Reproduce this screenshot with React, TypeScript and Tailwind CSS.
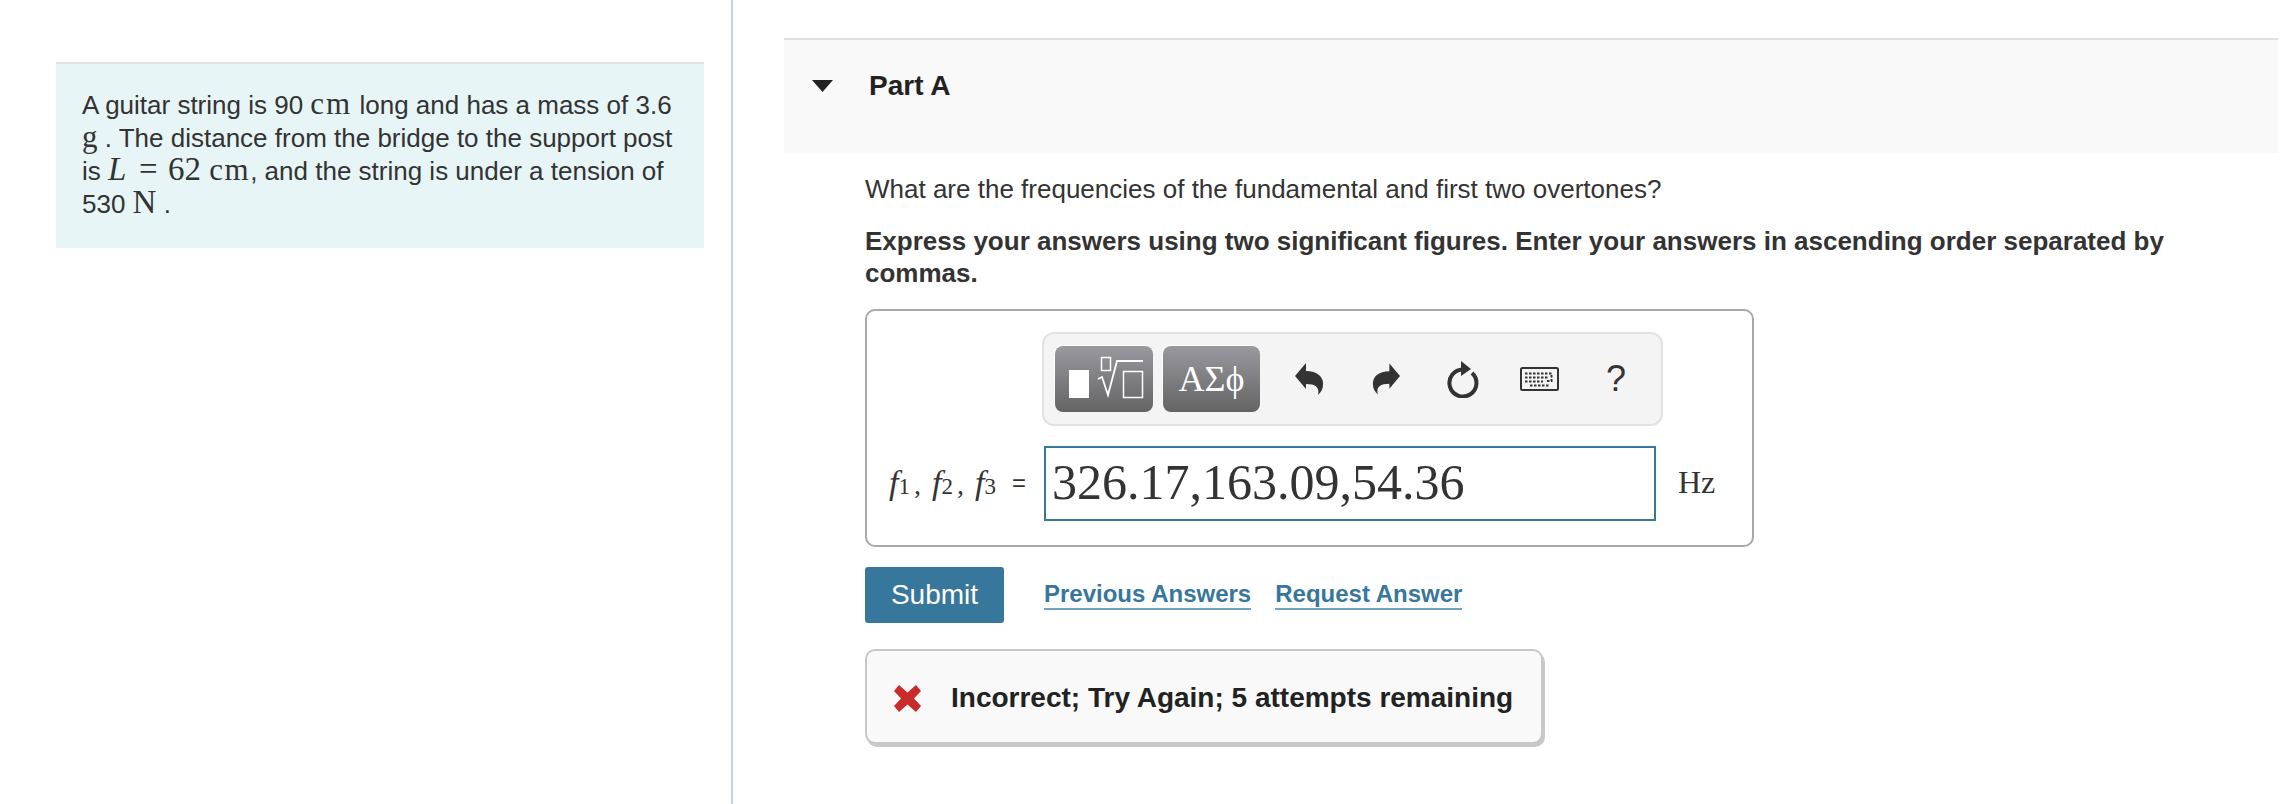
const serif = "font-['Liberation_Serif',serif]";

function Sub({ n, comma }: { n: string; comma?: boolean }) {
  return (
    <span className="inline-block w-[43px]">
      <i className="text-[34px]">f</i>
      <span className="text-[23px]">{n}</span>
      {comma ? <span className="ml-[4px] text-[28px]">,</span> : null}
    </span>
  );
}

function Toolbar() {
  return (
    <div className="ml-[175px] flex h-[94px] w-[621px] items-center rounded-[12px] border-2 border-[#e2e2e2] bg-[#f4f4f4] pl-[11px]">
      <div className="h-[66px] w-[98px] shrink-0 rounded-[8px] bg-linear-to-b from-[#9a99a0] to-[#646464] shadow-[-1px_-1px_0_#fff]">
        <svg width="98" height="66" viewBox="0 0 98 66" fill="none">
          <rect x="14" y="24" width="20" height="28" fill="#fff" />
          <rect x="46.500" y="11.500" width="9" height="13" stroke="#fff" strokeWidth="1.500" />
          <path d="M43 33l4-2 6 18 9-34h26" stroke="#fff" strokeWidth="1.800" />
          <rect x="68.500" y="25.500" width="19" height="26" stroke="#fff" strokeWidth="1.500" />
        </svg>
      </div>
      <div className={`ml-[10px] flex h-[66px] w-[97px] shrink-0 items-center justify-center rounded-[8px] bg-linear-to-b from-[#9a99a0] to-[#646464] text-[36px] text-white shadow-[-1px_-1px_0_#fff] ${serif}`}>
        ΑΣϕ
      </div>
      <svg className="ml-[35px] shrink-0" width="29" height="32" viewBox="0 0 29 32" fill="#333">
        <path d="M0 13L11 0v8c11 0 18 6 17 14 0 4-2 7-5 10 2-8-3-11-12-11v5z" />
      </svg>
      <svg className="ml-[48px] shrink-0" width="28" height="32" viewBox="0 0 29 32" fill="#333">
        <path d="M29 13L18 0v8C7 8 0 14 1 22c0 4 2 7 5 10-2-8 3-11 12-11v5z" />
      </svg>
      <svg className="ml-[46px] shrink-0" width="34" height="37" viewBox="0 0 34 37" fill="none">
        <path d="M17 8.500A13.500 13.500 0 1 0 26 12" stroke="#333" strokeWidth="4" />
        <path d="M15 0l10 8-10 7z" fill="#333" />
      </svg>
      <svg className="ml-[40px] shrink-0" width="39" height="24" viewBox="0 0 39 24" fill="none">
        <rect x="1" y="1" width="37" height="22" rx="1.500" fill="#f4f4f4" stroke="#333" strokeWidth="2" />
        <path d="M5 6.500h28M5 10.500h24M31.500 8v6H26M5 14.500h18M10 18.500h20" stroke="#333" strokeWidth="2" strokeDasharray="2.500 1.500" />
      </svg>
      <div className="ml-[47px] font-['Liberation_Sans',sans-serif] text-[36px] leading-none text-[#333]">?</div>
    </div>
  );
}

export default function App() {
  return (
    <div className="flex h-[804px] w-[2296px] overflow-hidden bg-white font-['Liberation_Sans',sans-serif] text-[#333]">
      <aside className="h-full w-[733px] shrink-0 border-r-2 border-[#c5d0e0] pt-[62px] pl-[56px]">
        <div className="h-[186px] w-[648px] border-t-2 border-[#e0e3e3] bg-[#e7f5f6] px-[26px] pt-[25px] text-[26px] leading-[33px]">
          A guitar string is 90 <span className={`${serif} text-[31px] leading-[0] tracking-[2px]`}>cm</span> long and has a mass of 3.6{" "}
          <span className={`${serif} text-[31px] leading-[0]`}>g</span> . The distance from the bridge to the support post is{" "}
          <span className={`${serif} text-[33px] leading-[0]`}>
            <i className="inline-block w-[31px]">L</i>
            <span className="inline-block w-[29px]">=</span>62 <span className="text-[31px] tracking-[1.5px]">cm</span>
          </span>
          , and the string is under a tension of 530 <span className={`${serif} text-[33px] leading-[0]`}>N</span> .
        </div>
      </aside>
      <main className="w-[1563px] shrink-0 pt-[38px] pl-[51px]">
        <header className="flex h-[115px] w-[1494px] items-start border-t-2 border-[#e0e0e0] bg-[#f9f9f9] pt-[28px]">
          <svg className="mt-[12px] ml-[28px]" width="21" height="12" viewBox="0 0 21 12" fill="#222">
            <path d="M0 0h21L10.500 12z" />
          </svg>
          <h2 className="ml-[36px] text-[28px] leading-[36px] font-bold text-[#222]">Part A</h2>
        </header>
        <section className="pl-[81px]">
          <p className="mt-[20px] text-[26px] leading-[33px]">What are the frequencies of the fundamental and first two overtones?</p>
          <p className="mt-[19px] w-[1340px] text-[26px] leading-[32px] font-bold">
            Express your answers using two significant figures. Enter your answers in ascending order separated by commas.
          </p>
          <div className="mt-[20px] h-[238px] w-[889px] rounded-[10px] border-2 border-[#a9a9a9] pt-[21px]">
            <Toolbar />
            <div className="mt-[20px] flex items-center">
              <div className={`mb-[2px] ml-[22px] flex w-[155px] shrink-0 items-center whitespace-nowrap ${serif}`}>
                <Sub n="1" comma />
                <Sub n="2" comma />
                <Sub n="3" />
                <span className="ml-[-6px] font-['Liberation_Sans',sans-serif] text-[24px]">=</span>
              </div>
              <div className={`flex h-[75px] w-[612px] shrink-0 items-center border-2 border-[#37779b] pb-[2px] pl-[6px] text-[50px] ${serif}`}>
                326.17,163.09,54.36
              </div>
              <div className={`mb-[4px] ml-[22px] text-[32px] ${serif}`}>Hz</div>
            </div>
          </div>
          <div className="mt-[20px] flex items-center">
            <button className="h-[56px] w-[139px] rounded-[3px] bg-[#37779b] text-[28px] text-white">Submit</button>
            <a className="ml-[40px] border-b-2 border-[#6fa3bf] text-[24px] leading-[28px] font-bold text-[#37779b]">Previous Answers</a>
            <a className="ml-[24px] border-b-2 border-[#6fa3bf] text-[24px] leading-[28px] font-bold text-[#37779b]">Request Answer</a>
          </div>
          <div className="mt-[26px] flex h-[95px] w-[678px] items-center rounded-[10px] border-2 border-[#c8c8c8] bg-[#f9f9f9] pt-[3px] pl-[27px] shadow-[2px_3px_0_#c8c8c8]">
            <svg className="shrink-0" width="27" height="27" viewBox="0 0 27 27" fill="#c92a2a">
              <path d="M5 0l8.500 7.500L22 0l5 6-7 7.500L27 21l-5 6-8.500-7.500L5 27l-5-6 7-7.500L0 6z" />
            </svg>
            <span className="ml-[30px] text-[28px] font-bold whitespace-nowrap text-[#222]">Incorrect; Try Again; 5 attempts remaining</span>
          </div>
        </section>
      </main>
    </div>
  );
}
